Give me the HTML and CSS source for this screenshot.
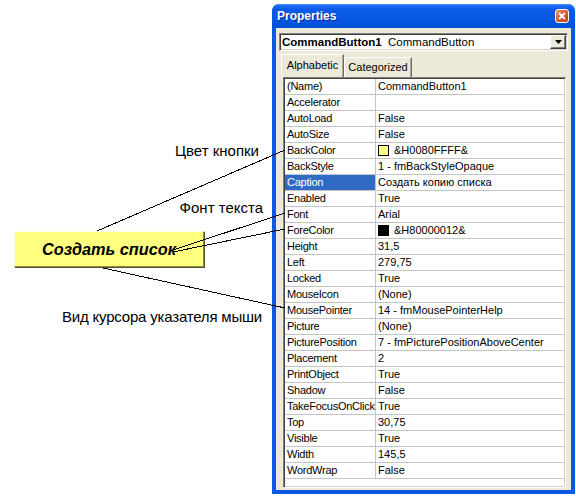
FILE: index.html
```html
<!DOCTYPE html>
<html>
<head>
<meta charset="utf-8">
<link rel="stylesheet" href="styles.css">
</head>
<body>
<div class="desk">
  <div class="notes">
    <div class="label l1">Цвет кнопки</div>
    <div class="label l2">Фонт текста</div>
    <div class="demo-btn">Создать список</div>
    <div class="label l3">Вид курсора указателя мыши</div>
  </div>
  <div class="window">
    <div class="titlebar">
      <span class="title">Properties</span>
      <span class="close"><svg width="12" height="12" viewBox="0 0 12 12"><path d="M3 3 L9 9 M9 3 L3 9" stroke="#fff" stroke-width="1.8" fill="none"/></svg></span>
    </div>
    <div class="wbody">
      <div class="combo">
        <span class="obj"><b>CommandButton1</b>&nbsp; CommandButton</span>
        <span class="drop"><svg width="7" height="4" viewBox="0 0 7 4"><path d="M0 0 H7 L3.5 4 Z" fill="#000"/></svg></span>
      </div>
      <div class="tabs">
        <div class="tab active">Alphabetic</div>
        <div class="tab cat">Categorized</div>
      </div>
      <div class="grid">
        <div class="row"><div class="k">(Name)</div><div class="v">CommandButton1</div></div>
        <div class="row"><div class="k">Accelerator</div><div class="v"></div></div>
        <div class="row"><div class="k">AutoLoad</div><div class="v">False</div></div>
        <div class="row"><div class="k">AutoSize</div><div class="v">False</div></div>
        <div class="row"><div class="k">BackColor</div><div class="v"><span class="sw yellow"></span>&amp;H0080FFFF&amp;</div></div>
        <div class="row"><div class="k">BackStyle</div><div class="v">1 - fmBackStyleOpaque</div></div>
        <div class="row"><div class="k sel">Caption</div><div class="v">Создать копию списка</div></div>
        <div class="row"><div class="k">Enabled</div><div class="v">True</div></div>
        <div class="row"><div class="k">Font</div><div class="v">Arial</div></div>
        <div class="row"><div class="k">ForeColor</div><div class="v"><span class="sw black"></span>&amp;H80000012&amp;</div></div>
        <div class="row"><div class="k">Height</div><div class="v">31,5</div></div>
        <div class="row"><div class="k">Left</div><div class="v">279,75</div></div>
        <div class="row"><div class="k">Locked</div><div class="v">True</div></div>
        <div class="row"><div class="k">MouseIcon</div><div class="v">(None)</div></div>
        <div class="row"><div class="k">MousePointer</div><div class="v">14 - fmMousePointerHelp</div></div>
        <div class="row"><div class="k">Picture</div><div class="v">(None)</div></div>
        <div class="row"><div class="k">PicturePosition</div><div class="v">7 - fmPicturePositionAboveCenter</div></div>
        <div class="row"><div class="k">Placement</div><div class="v">2</div></div>
        <div class="row"><div class="k">PrintObject</div><div class="v">True</div></div>
        <div class="row"><div class="k">Shadow</div><div class="v">False</div></div>
        <div class="row"><div class="k">TakeFocusOnClick</div><div class="v">True</div></div>
        <div class="row"><div class="k">Top</div><div class="v">30,75</div></div>
        <div class="row"><div class="k">Visible</div><div class="v">True</div></div>
        <div class="row"><div class="k">Width</div><div class="v">145,5</div></div>
        <div class="row"><div class="k">WordWrap</div><div class="v">False</div></div>
      </div>
    </div>
  </div>
  <svg class="leaders" width="576" height="496" viewBox="0 0 576 496" shape-rendering="crispEdges">
    <path d="M97 231 L285 150" stroke="#000" stroke-width="1" fill="none"/>
    <path d="M173 250 L285 213" stroke="#000" stroke-width="1" fill="none"/>
    <path d="M173 252 L285 229" stroke="#000" stroke-width="1" fill="none"/>
    <path d="M103 268 L285 308" stroke="#000" stroke-width="1" fill="none"/>
  </svg>
</div>
</body>
</html>
```
FILE: styles.css
```css
html, body {
  margin: 0;
  padding: 0;
  background: #fff;
}
body {
  font-family: "Liberation Sans", Arial, sans-serif;
  color: #000;
}
.desk {
  position: relative;
  width: 576px;
  height: 496px;
  display: flex;
  align-items: flex-start;
  overflow: hidden;
}
.notes {
  width: 272px;
  flex: none;
  display: flex;
  flex-direction: column;
  align-items: flex-end;
}
.label {
  font-size: 15px;
  line-height: 18px;
  white-space: nowrap;
}
.l1 { margin-top: 142px; margin-right: 13px; }
.l2 { margin-top: 39px; margin-right: 9px; }
.l3 { margin-top: 41px; margin-right: 10px; letter-spacing: -0.2px; }
.demo-btn {
  align-self: flex-start;
  margin-top: 14px;
  margin-left: 14px;
  box-sizing: border-box;
  width: 190px;
  height: 36px;
  background: #ffff80;
  border: 1px solid;
  border-color: #ffffe8 #8c8c3c #8c8c3c #ffffe8;
  box-shadow: 1px 1px 0 #55552a;
  font-size: 16.3px;
  font-weight: bold;
  font-style: italic;
  line-height: 34px;
  text-align: center;
  white-space: nowrap;
}
.window {
  flex: none;
  margin-top: 4px;
  width: 303px;
  height: 490px;
  box-sizing: border-box;
  padding: 0 4px 4px;
  background: #0a58e4;
  border-radius: 7px 7px 0 0;
  display: flex;
  flex-direction: column;
}
.titlebar {
  height: 24px;
  flex: none;
  margin: 0 -4px;
  padding: 0 6px 0 4px;
  border-radius: 7px 7px 0 0;
  background: linear-gradient(#4c97ff 0, #1a66f0 2px, #0a5ae8 6px, #0557e4 60%, #0450d6 100%);
  display: flex;
  align-items: center;
  justify-content: space-between;
}
.title {
  color: #fff;
  font-weight: bold;
  font-size: 12px;
  padding-left: 1px;
  text-shadow: 1px 1px 0 #0a2e8a;
}
.close {
  width: 12px;
  height: 12px;
  border: 1px solid #fff;
  border-radius: 3px;
  background: linear-gradient(135deg, #f09a80 0%, #e0603c 40%, #c43c18 100%);
  display: flex;
  align-items: center;
  justify-content: center;
}
.wbody {
  flex: 1;
  background: #ece9d8;
  display: flex;
  flex-direction: column;
  font-size: 11px;
}
.combo {
  margin: 5px 3px 0 3px;
  height: 18px;
  box-sizing: border-box;
  background: #fff;
  border: 1px solid;
  border-color: #808080 #fff #fff #808080;
  box-shadow: inset 1px 1px 0 #404040, inset -1px -1px 0 #d4d0c8;
  padding: 1px;
  display: flex;
  align-items: center;
  justify-content: space-between;
}
.obj {
  padding-left: 1px;
  font-size: 11.5px;
  white-space: nowrap;
}
.drop {
  width: 16px;
  height: 14px;
  box-sizing: border-box;
  background: #ece9d8;
  border: 1px solid;
  border-color: #fff #404040 #404040 #fff;
  box-shadow: inset -1px -1px 0 #808080;
  display: flex;
  align-items: center;
  justify-content: center;
}
.tabs {
  margin: 3px 0 0 5px;
  height: 23px;
  display: flex;
  align-items: flex-end;
}
.tab {
  box-sizing: border-box;
  border: 1px solid;
  border-bottom: none;
  border-color: #fff #716f64 transparent #fff;
  box-shadow: inset -1px 0 0 #aca899;
  text-align: center;
  height: 20px;
  line-height: 18px;
  white-space: nowrap;
}
.tab.active {
  width: 63px;
  height: 23px;
  line-height: 20px;
}
.tab.cat {
  width: 68px;
}
.grid {
  margin: 0 5px 2px 7px;
  flex: 1;
  box-sizing: border-box;
  background: #fff;
  border: 1px solid;
  border-color: #808080 #fff #fff #808080;
  box-shadow: inset 1px 1px 0 #404040, inset -1px -1px 0 #d4d0c8;
  padding: 1px;
}
.row {
  display: flex;
  height: 16px;
  box-sizing: border-box;
  border-bottom: 1px solid #c4c4c4;
  line-height: 15px;
  white-space: nowrap;
}
.k {
  width: 91px;
  flex: none;
  box-sizing: border-box;
  border-right: 1px solid #c4c4c4;
  padding-left: 2px;
  overflow: hidden;
  letter-spacing: -0.25px;
}
.k.sel {
  background: #316ac5;
  color: #fff;
}
.v {
  flex: 1;
  padding-left: 2px;
  display: flex;
  align-items: center;
}
.sw {
  width: 11px;
  height: 11px;
  box-sizing: border-box;
  border: 1px solid #000;
  margin-right: 5px;
}
.sw.yellow { background: #ffff80; }
.sw.black { background: #000; }
.leaders {
  position: absolute;
  left: 0;
  top: 0;
  pointer-events: none;
}
```
